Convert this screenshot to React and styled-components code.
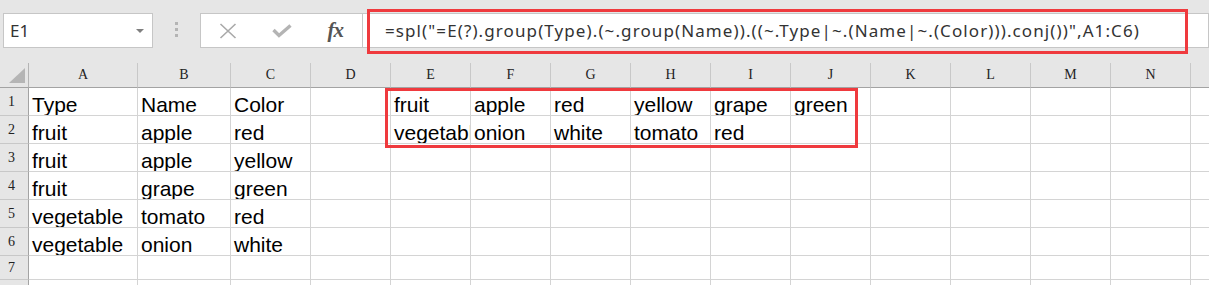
import React from "react";
import styled, { createGlobalStyle } from "styled-components";

const GlobalStyle = createGlobalStyle`
    html, body {
        margin: 0;
        padding: 0;
        background: #fff;
        overflow: hidden;
    }
`;

const Page = styled.div`
    position: relative;
    width: 1209px;
    height: 285px;
    overflow: hidden;
`;

const Toolbar = styled.div`
    position: relative;
    display: flex;
    align-items: flex-start;
    height: 63px;
    padding: 13px 0 0 3px;
    box-sizing: border-box;
    background: #e6e6e6;
`;

const NameBox = styled.div`
    display: flex;
    align-items: center;
    justify-content: space-between;
    width: 150px;
    height: 35px;
    box-sizing: border-box;
    padding: 0 8px 0 6px;
    background: #fff;
    border: 1px solid #c6c6c6;
    font: 17px "Noto Sans", sans-serif;
    color: #333;
`;

const Caret = styled.span`
    width: 0;
    height: 0;
    border-left: 4px solid transparent;
    border-right: 4px solid transparent;
    border-top: 4px solid #7f7f7f;
`;

const Grip = styled.div`
    display: flex;
    flex-direction: column;
    align-items: center;
    gap: 3px;
    width: 47px;
    padding-top: 9px;
    span {
        width: 3px;
        height: 3px;
        background: #b4b4b4;
    }
`;

const FxButtons = styled.div`
    display: flex;
    width: 162px;
    height: 35px;
    box-sizing: border-box;
    background: #fff;
    border: 1px solid #c6c6c6;
    border-right: none;
`;

const FxSlot = styled.div`
    display: flex;
    align-items: center;
    justify-content: center;
    width: 54px;
    height: 100%;
`;

const FxLabel = styled.span`
    font: italic bold 21px "Liberation Serif", serif;
    color: #555;
    letter-spacing: -1px;
`;

const FormulaInput = styled.div`
    flex: 1;
    display: flex;
    align-items: center;
    height: 35px;
    box-sizing: border-box;
    padding-left: 22px;
    background: #fff;
    border: 1px solid #c6c6c6;
    font: 17px "Noto Sans", sans-serif;
    letter-spacing: 1.1px;
    color: #333;
    white-space: nowrap;
`;

const Highlight = styled.div`
    position: absolute;
    left: ${p => p.x}px;
    top: ${p => p.y}px;
    width: ${p => p.w}px;
    height: ${p => p.h}px;
    box-sizing: border-box;
    border: 3px solid #ef3a3e;
    pointer-events: none;
`;

const Sheet = styled.div`
    position: relative;
    display: grid;
    grid-template-columns: 29px 109px 93px 80px 80px repeat(11, 80px);
    grid-template-rows: 25px repeat(6, 28px) 24px 24px;
    width: max-content;
`;

const Corner = styled.div`
    position: relative;
    background: #e6e6e6;
    border-right: 1px solid #b4b4b4;
    border-bottom: 1px solid #a3a3a3;
    &::after {
        content: "";
        position: absolute;
        right: 3px;
        bottom: 4px;
        width: 0;
        height: 0;
        border-left: 16px solid transparent;
        border-bottom: 15px solid #b5b5b5;
    }
`;

const ColHead = styled.div`
    display: flex;
    align-items: center;
    justify-content: center;
    background: #e6e6e6;
    border-right: 1px solid #c8c8c8;
    border-bottom: 1px solid #a3a3a3;
    font: 14px "Liberation Serif", serif;
    color: #222;
`;

const RowHead = styled.div`
    display: flex;
    align-items: center;
    justify-content: center;
    padding-right: 5px;
    background: #e6e6e6;
    border-right: 1px solid #a3a3a3;
    border-bottom: 1px solid #c8c8c8;
    font: 14px "Liberation Serif", serif;
    color: #222;
`;

const Cell = styled.div`
    box-sizing: border-box;
    padding: 6px 0 0 3px;
    border-right: 1px solid #d4d4d4;
    border-bottom: 1px solid #d4d4d4;
    font: 21px/21px "Liberation Sans", Arial, sans-serif;
    color: #000;
    white-space: nowrap;
    overflow: hidden;
`;

const columns = ["A", "B", "C", "D", "E", "F", "G", "H", "I", "J", "K", "L", "M", "N", "O"];

const rows = [
    ["Type", "Name", "Color", "", "fruit", "apple", "red", "yellow", "grape", "green"],
    ["fruit", "apple", "red", "", "vegetable", "onion", "white", "tomato", "red"],
    ["fruit", "apple", "yellow"],
    ["fruit", "grape", "green"],
    ["vegetable", "tomato", "red"],
    ["vegetable", "onion", "white"],
    [],
    [],
];

const formula = `=spl("=E(?).group(Type).(~.group(Name)).((~.Type|~.(Name|~.(Color))).conj())",A1:C6)`;

const App = () => {
    return (
        <React.Fragment>
            <GlobalStyle />
            <Page>
                <Toolbar>
                    <NameBox>
                        <span>E1</span>
                        <Caret />
                    </NameBox>
                    <Grip>
                        <span />
                        <span />
                        <span />
                    </Grip>
                    <FxButtons>
                        <FxSlot>
                            <svg width="18" height="16" viewBox="0 0 18 16">
                                <path d="M1.5 1 L16.5 15 M16.5 1 L1.5 15" stroke="#a9a9a9" strokeWidth="1.6" fill="none" />
                            </svg>
                        </FxSlot>
                        <FxSlot>
                            <svg width="20" height="14" viewBox="0 0 20 14">
                                <path d="M1.5 6 L7 11.5 L18.5 1.5" stroke="#b4b4b4" strokeWidth="3.4" fill="none" />
                            </svg>
                        </FxSlot>
                        <FxSlot>
                            <FxLabel>fx</FxLabel>
                        </FxSlot>
                    </FxButtons>
                    <FormulaInput>{formula}</FormulaInput>
                    <Highlight x={367} y={9} w={821} h={45} />
                </Toolbar>
                <Sheet>
                    <Corner />
                    {columns.map(c => (
                        <ColHead key={c}>{c}</ColHead>
                    ))}
                    {rows.map((r, i) => (
                        <React.Fragment key={i}>
                            <RowHead>{i + 1}</RowHead>
                            {columns.map((c, j) => (
                                <Cell key={c}>{r[j] || ""}</Cell>
                            ))}
                        </React.Fragment>
                    ))}
                    <Highlight x={385} y={25} w={473} h={60} />
                </Sheet>
            </Page>
        </React.Fragment>
    );
};

export default App;
